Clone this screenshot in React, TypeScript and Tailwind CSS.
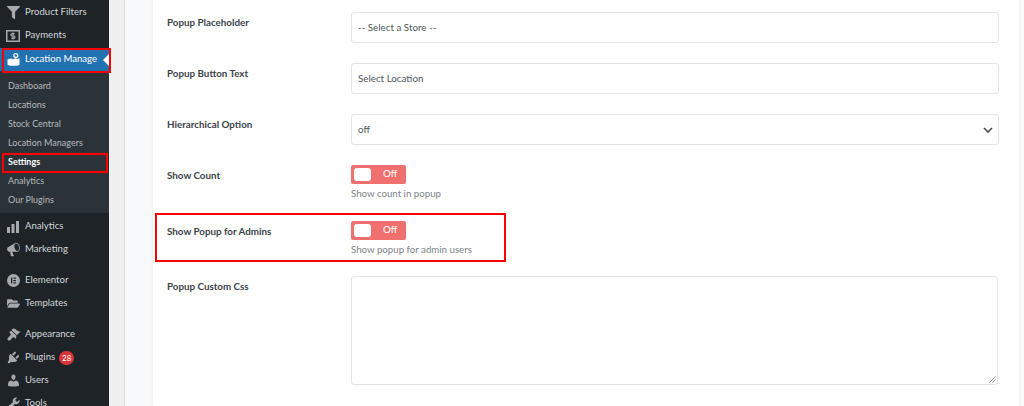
import type { ReactNode } from 'react';
import { FaFilter, FaFolderOpen } from 'react-icons/fa';

function DashIcon({ d, size = 15 }: { d: string; size?: number }) {
  return (
    <svg width={size} height={size} viewBox="0 0 20 20" fill="#a7aaad">
      <path d={d} />
    </svg>
  );
}

function MoneyIcon() {
  return (
    <svg width="14" height="12" viewBox="0 0 14 12">
      <rect x="0.75" y="0.75" width="12.5" height="10.5" fill="none" stroke="#a7aaad" strokeWidth="1.5" />
      <path d="M8.6 3.6H6.2a1 1 0 0 0 0 2.4h1.6a1 1 0 0 1 0 2.4H5.2M7 2.6v6.8" fill="none" stroke="#a7aaad" strokeWidth="1.2" />
    </svg>
  );
}

function LocationIcon() {
  return (
    <svg width="13" height="13" viewBox="0 0 13 13">
      <path d="M0.5 6.5 4 5.2l1.2 1 3.4-.6 1.6.4 2.3-.8V12l-3 .8H3l-2.5-1z" fill="#fff" />
      <circle cx="8.8" cy="2.6" r="2" fill="none" stroke="#fff" strokeWidth="1.2" />
      <path d="M7.4 3.8 8.8 6l1.4-2.2z" fill="#fff" />
    </svg>
  );
}

function BarsIcon() {
  return (
    <svg width="12" height="12" viewBox="0 0 12 12" fill="#a7aaad">
      <rect x="0" y="6" width="3" height="6" />
      <rect x="4.5" y="3" width="3" height="9" />
      <rect x="9" y="0" width="3" height="12" />
    </svg>
  );
}

function ElementorIcon() {
  return (
    <svg width="13" height="13" viewBox="0 0 13 13">
      <circle cx="6.5" cy="6.5" r="6.5" fill="#a7aaad" />
      <rect x="4" y="3.6" width="1.2" height="5.8" fill="#1d2327" />
      <rect x="6.2" y="3.6" width="2.8" height="1.1" fill="#1d2327" />
      <rect x="6.2" y="5.95" width="2.8" height="1.1" fill="#1d2327" />
      <rect x="6.2" y="8.3" width="2.8" height="1.1" fill="#1d2327" />
    </svg>
  );
}

const megaphone =
  'M18.15 5.94c.46 1.62.38 3.22-.02 4.48-.42 1.28-1.26 2.18-2.3 2.48-.16.06-.26.06-.4.06-.06.02-.12.02-.18.02-.06.02-.14.02-.22.02h-6.8l2.22 5.5c.02.14-.06.26-.14.34-.08.1-.24.16-.34.16H6.95c-.1 0-.26-.06-.34-.16-.08-.08-.16-.2-.14-.34l-1-5.5H4.25l-.02-.02c-.5.06-1.08-.18-1.54-.62s-.88-1.08-1.06-1.88c-.24-.8-.2-1.56-.02-2.2.18-.62.58-1.08 1.06-1.3l.02-.02 9-5.4c.1-.06.18-.1.24-.16.06-.04.14-.08.24-.12.16-.08.28-.12.5-.18 1.04-.3 2.24.1 3.22.98s1.84 2.24 2.26 3.86zm-2.58 5.98h-.02c.4-.1.74-.34 1.04-.7.58-.7.86-1.76.86-3.04-.02-.64-.1-1.3-.28-1.98-.34-1.36-1.02-2.5-1.78-3.24s-1.68-1.1-2.46-.88c-.38.12-.72.34-.98.7-.58.7-.84 1.76-.82 3.04 0 .64.08 1.3.26 1.98.34 1.34 1 2.48 1.78 3.2.8.74 1.62 1.1 2.4.92z';
const brush =
  'M14.48 11.06 7.41 3.99l1.5-1.5c.5-.56 2.3-.47 3.51.32 1.21.8 1.43 1.28 2.91 2.1 1.18.64 2.45 1.26 4.45.85zm-.71.71L6.7 4.7 4.93 6.47c-.39.39-.39 1.02 0 1.41l1.06 1.06c.59.59.59 1.54 0 2.12L2.5 14.5c-.8.8-.8 2.2 0 3s2.2.8 3 0l3.44-3.49c.58-.59 1.53-.59 2.12 0l1.06 1.06c.39.39 1.02.39 1.41 0z';
const plug =
  'M13.11 4.36 9.87 7.6 8 5.73l3.24-3.24c.35-.34 1.05-.2 1.56.32.52.51.66 1.21.31 1.55zm-8 1.77.91-1.12 9.01 9.01-1.19.84c-.71.71-2.63 1.16-3.82 1.16H6.14L4.9 17.26c-.59.59-1.54.59-2.12 0-.59-.58-.59-1.53 0-2.12l1.24-1.24v-3.88c0-1.13.4-3.19 1.09-3.89zm7.26 3.97 3.24-3.24c.34-.35 1.04-.21 1.55.31.52.51.66 1.21.31 1.55l-3.24 3.25z';
const user =
  'M10 9.25c-2.27 0-2.73-3.44-2.73-3.44C7 4.02 7.82 2 9.97 2c2.16 0 2.98 2.02 2.71 3.81 0 0-.41 3.44-2.68 3.44zm0 2.57L12.72 10c2.39 0 4.52 2.33 4.52 4.53v2.49s-3.65 1.13-7.24 1.13c-3.65 0-7.24-1.13-7.24-1.13v-2.49c0-2.25 1.94-4.48 4.47-4.48z';
const wrench =
  'M16.68 9.77c-1.34 1.34-3.3 1.67-4.95.99l-5.41 6.52c-.99.99-2.59.99-3.58 0s-.99-2.59 0-3.57l6.52-5.42c-.68-1.65-.35-3.61.99-4.95 1.28-1.28 3.12-1.62 4.72-1.06l-2.89 2.89 2.82 2.82 2.86-2.87c.53 1.58.18 3.39-1.08 4.67zM3.81 16.21c.4.39 1.04.39 1.43 0 .4-.4.4-1.04 0-1.43-.39-.4-1.03-.4-1.43 0-.39.39-.39 1.03 0 1.43z';

function MenuItem({ icon, children, className = '' }: { icon: ReactNode; children: ReactNode; className?: string }) {
  return (
    <div className={`flex h-[23px] items-center whitespace-nowrap text-[9.6px] text-[#d3d6d9] ${className}`}>
      <span className="flex w-[25px] shrink-0 justify-center pl-[1px] text-[13px] text-[#a7aaad]">{icon}</span>
      {children}
    </div>
  );
}

function SubItem({ children, active = false }: { children: ReactNode; active?: boolean }) {
  return (
    <div className={`flex h-[19px] items-center whitespace-nowrap pl-[8px] text-[9px] ${active ? 'font-bold text-white' : 'text-[#b4b9be]'}`}>
      {children}
    </div>
  );
}

function Sidebar() {
  return (
    <aside className="w-[109px] shrink-0 bg-[#1d2327] pt-[1px]">
      <MenuItem icon={<FaFilter />}>Product Filters</MenuItem>
      <MenuItem icon={<MoneyIcon />}>Payments</MenuItem>
      <div className="relative mt-[1px]">
        <MenuItem icon={<LocationIcon />} className="bg-[#2271b1] text-white">
          Location Manage
        </MenuItem>
        <div className="absolute right-0 top-[6px] h-0 w-0 border-y-[6px] border-r-[6px] border-y-transparent border-r-white" />
        <div className="absolute left-[2px] top-0 h-[25px] w-[109px] border-2 border-[#ff0000]" />
      </div>
      <div className="bg-[#2c3338] pb-[4px] pt-[5px]">
        <SubItem>Dashboard</SubItem>
        <SubItem>Locations</SubItem>
        <SubItem>Stock Central</SubItem>
        <SubItem>Location Managers</SubItem>
        <div className="relative">
          <SubItem active>Settings</SubItem>
          <div className="absolute left-[2px] top-[1px] h-[20px] w-[106px] border-2 border-[#ff0000]" />
        </div>
        <SubItem>Analytics</SubItem>
        <SubItem>Our Plugins</SubItem>
      </div>
      <div className="pt-[2px]">
        <MenuItem icon={<BarsIcon />}>Analytics</MenuItem>
        <MenuItem icon={<DashIcon d={megaphone} />}>Marketing</MenuItem>
      </div>
      <div className="pt-[8px]">
        <MenuItem icon={<ElementorIcon />}>Elementor</MenuItem>
        <MenuItem icon={<FaFolderOpen />}>Templates</MenuItem>
      </div>
      <div className="pt-[8px]">
        <MenuItem icon={<DashIcon d={brush} />}>Appearance</MenuItem>
        <MenuItem icon={<DashIcon d={plug} />}>
          Plugins
          <span className="ml-[4px] flex h-[14px] min-w-[15px] items-center justify-center rounded-full bg-[#d63638] px-[2px] text-[8px] text-white">
            28
          </span>
        </MenuItem>
        <MenuItem icon={<DashIcon d={user} />}>Users</MenuItem>
        <MenuItem icon={<DashIcon d={wrench} />}>Tools</MenuItem>
      </div>
    </aside>
  );
}

function Field({ label, children, className = '' }: { label: string; children: ReactNode; className?: string }) {
  return (
    <div className={`grid grid-cols-[184px_648px] ${className}`}>
      <div className="pt-[3px] text-[9.8px] font-bold leading-[14px] text-[#3c434a]">{label}</div>
      <div>{children}</div>
    </div>
  );
}

function TextBox({ children }: { children: ReactNode }) {
  return (
    <div className="flex h-[31px] items-center justify-between rounded-[3px] border border-[#e2e4e7] bg-white px-[6px] text-[9.8px] text-[#50575e]">
      {children}
    </div>
  );
}

function Toggle({ help }: { help: string }) {
  return (
    <>
      <div className="flex h-[19px] w-[55px] items-center rounded-[2px] bg-[#f07070] pl-[3px]">
        <span className="h-[13px] w-[17px] rounded-[3px] bg-white" />
        <span className="ml-[12px] pb-[2px] text-[9.8px] leading-none text-white">Off</span>
      </div>
      <p className="mt-[2px] h-[15px] text-[9.7px] leading-[14px] text-[#7c8288]">{help}</p>
    </>
  );
}

export default function App() {
  return (
    <div className="flex h-[406px] w-[1024px] overflow-hidden bg-[#f8f9fb] font-['Lato','Liberation_Sans',sans-serif]">
      <Sidebar />
      <div className="w-[16px] shrink-0 border-r border-[#dcdcde] bg-[#f0f0f1]" />
      <div className="w-[28px] shrink-0" />
      <main className="w-[866px] shrink-0 bg-white pl-[14px] pt-[12px] shadow-[0_0_3px_rgba(0,0,0,0.08)]">
        <Field label="Popup Placeholder">
          <TextBox>-- Select a Store --</TextBox>
        </Field>
        <Field label="Popup Button Text" className="mt-[20px]">
          <TextBox>Select Location</TextBox>
        </Field>
        <Field label="Hierarchical Option" className="mt-[20px]">
          <TextBox>
            off
            <svg width="10" height="6" viewBox="0 0 10 6" className="mr-[-1px]">
              <path d="M1 1l4 4 4-4" fill="none" stroke="#444b52" strokeWidth="1.6" />
            </svg>
          </TextBox>
        </Field>
        <Field label="Show Count" className="mt-[20px]">
          <Toggle help="Show count in popup" />
        </Field>
        <div className="relative mt-[20px]">
          <Field label="Show Popup for Admins">
            <Toggle help="Show popup for admin users" />
          </Field>
          <div className="absolute left-[-12px] top-[-8px] h-[49px] w-[351px] border-2 border-[#ff0000]" />
        </div>
        <Field label="Popup Custom Css" className="mt-[19px]">
          <div className="relative h-[109px] w-[647px] rounded-[3px] border border-[#e2e4e7] bg-white">
            <svg width="7" height="7" viewBox="0 0 7 7" className="absolute bottom-[1px] right-[1px]">
              <path d="M0.5 6.5 6.5 0.5M3.5 6.5l3-3" stroke="#777" strokeWidth="0.8" />
            </svg>
          </div>
        </Field>
      </main>
    </div>
  );
}
